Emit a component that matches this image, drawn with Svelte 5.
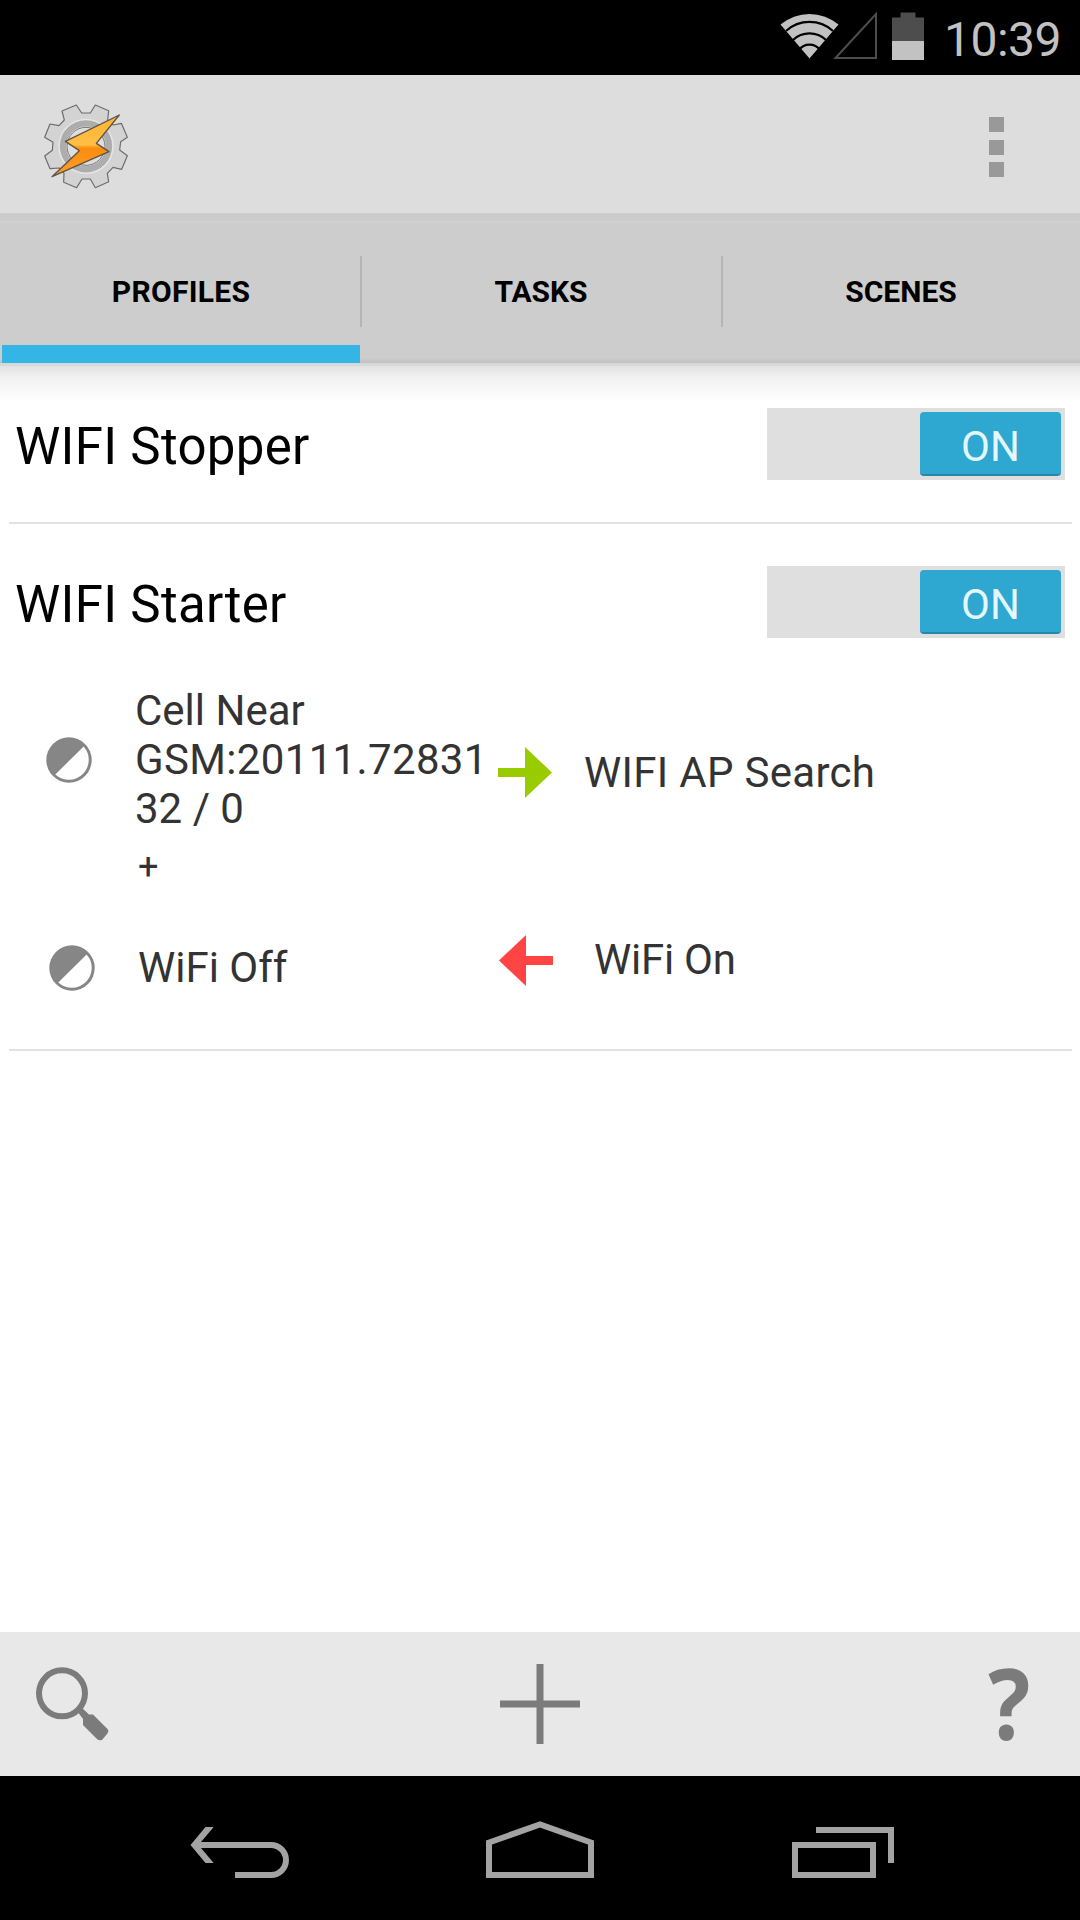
<script>
  const tabs = ['PROFILES', 'TASKS', 'SCENES'];
  let activeTab = $state('PROFILES');

  const profiles = [
    { name: 'WIFI Stopper', open: false },
    { name: 'WIFI Starter', open: true }
  ];
</script>

{#snippet halfCircle()}
  <svg width="46" height="46" viewBox="0 0 46 46">
    <circle cx="23" cy="23" r="22.700" fill="#868686" />
    <path d="M9.300 37.600L37.600 9.400A20 20 0 0 1 9.300 37.600Z" fill="#fff" />
  </svg>
{/snippet}

<div class="screen">
  <div class="status-bar">
    <svg width="150" height="75" viewBox="776 0 150 75">
      <path d="M809.500 58.500L780.500 24.500A45 45 0 0 1 838.500 24.500Z" fill="#c2c2c2" />
      <g fill="none" stroke="#000" stroke-width="2.200">
        <path d="M786 31A35 35 0 0 1 833 31" />
        <path d="M793 40A24 24 0 0 1 826 40" />
        <path d="M799 50A13 13 0 0 1 820 50" />
      </g>
      <path d="M835.500 58L876 14V58Z" fill="none" stroke="#4d4d4d" stroke-width="2" />
      <path d="M892 17.500H900.500V12.500H915.500V17.500H924V42H892Z" fill="#4d4d4d" />
      <path d="M892 41H924V60H892Z" fill="#c2c2c2" />
    </svg>
    <span class="clock">10:39</span>
  </div>

  <header class="action-bar">
    <svg class="logo" width="140" height="130" viewBox="0 0 420 390">
      <defs>
        <linearGradient id="bolt" x1="0" y1="0" x2="0" y2="1">
          <stop offset="0" stop-color="#fdb52f" />
          <stop offset="0.480" stop-color="#ffbe45" />
          <stop offset="0.540" stop-color="#fb8c0c" />
          <stop offset="1" stop-color="#fba02c" />
        </linearGradient>
      </defs>
      <path
        d="M126 93L169 75L185 99H211L226 75L266 92L263 120L280 135L304 130L322 172L302 185L299 210L322 227L305 268L279 262L262 280L266 305L226 323L211 297H186L170 323L131 307L132 280L118 264L90 266L74 228L97 211L99 187L74 172L90 132L117 137L133 120Z"
        fill="#d3d3d3" stroke="#6c6c6c" stroke-width="3.500" stroke-linejoin="round"
      />
      <circle cx="198" cy="199" r="83" fill="#e6e6e6" />
      <circle cx="198" cy="199" r="69" fill="none" stroke="#adadad" stroke-width="19" />
      <circle cx="198" cy="199" r="57" fill="#dedede" stroke="#777" stroke-width="3" />
      <path d="M298 105L229 190L267 215L96 290L178 212L136 184Z" fill="url(#bolt)" stroke="#5f5346" stroke-width="4" stroke-linejoin="round" />
    </svg>
    <div class="overflow"><i></i><i></i><i></i></div>
  </header>

  <nav class="tabs">
    {#each tabs as tab}
      <button class="tab" class:active={tab === activeTab} onclick={() => (activeTab = tab)}>
        {tab}
      </button>
    {/each}
  </nav>

  <main>
    {#each profiles as profile}
      <section class="profile">
        <div class="profile-head">
          <span class="title">{profile.name}</span>
          <div class="switch"><span class="thumb">ON</span></div>
        </div>
        {#if profile.open}
          <div class="details">
            <div class="contexts">
              <div class="context">
                {@render halfCircle()}
                <span>Cell Near<br /><span class="cell-id">GSM:20111.72831</span><br />32 / 0</span>
              </div>
              <div class="and">+</div>
              <div class="context second">
                {@render halfCircle()}
                <span>WiFi Off</span>
              </div>
            </div>
            <div class="tasks">
              <div class="task">
                <svg width="55" height="51" viewBox="0 0 55 51">
                  <path d="M0 21H27V0L54 25.500L27 51V30H0Z" fill="#99cc00" />
                </svg>
                <span class="enter">WIFI AP Search</span>
              </div>
              <div class="task">
                <svg width="55" height="51" viewBox="0 0 55 51">
                  <path d="M55 21H28V0L1 25.500L28 51V30H55Z" fill="#ff4444" />
                </svg>
                <span class="exit">WiFi On</span>
              </div>
            </div>
          </div>
        {/if}
      </section>
    {/each}
  </main>

  <footer class="toolbar">
    <svg width="80" height="80" viewBox="30 1664 80 80">
      <circle cx="62" cy="1693.300" r="23" fill="none" stroke="#7b7b7b" stroke-width="6" />
      <path d="M77 1711L81 1707L89 1714.500H93L108 1729.500Q109 1732 107 1734L102 1740Q99 1741 97 1739L83 1725V1719Z" fill="#7b7b7b" />
    </svg>
    <svg width="80" height="80" viewBox="0 0 80 80">
      <path d="M40 0V80M0 40H80" stroke="#7b7b7b" stroke-width="7" />
    </svg>
    <span class="help">?</span>
  </footer>

  <div class="nav-bar">
    <svg width="102" height="60" viewBox="189 1821 102 60">
      <path class="solid" d="M190.500 1845L205.500 1827H213.700L201 1842H271A18 18 0 0 1 271 1878H235V1872H271A12 12 0 0 0 271 1848H201L213.700 1863H205.500Z" />
    </svg>
    <svg width="108" height="60" viewBox="486 1821 108 60">
      <path d="M489 1875V1842.500L540 1824.500L591 1842.500V1875Z" />
    </svg>
    <svg width="102" height="60" viewBox="792 1821 102 60">
      <path d="M795 1845H873V1875H795ZM816 1830H891V1863" />
    </svg>
  </div>
</div>

<style>
  :global(body) {
    background: #fff;
  }

  .screen {
    display: flex;
    flex-direction: column;
    width: 1080px;
    height: 1920px;
    overflow: hidden;
    font-family: Roboto, sans-serif;
    color: #000;
  }

  .screen svg {
    display: block;
    flex: none;
  }

  .status-bar {
    display: flex;
    justify-content: flex-end;
    height: 75px;
    padding-right: 18px;
    background: #000;
  }

  .clock {
    width: 118px;
    margin-left: 18px;
    font-size: 48px;
    line-height: 79px;
    letter-spacing: -0.5px;
    color: #c2c2c2;
    white-space: nowrap;
  }

  .action-bar {
    display: flex;
    justify-content: space-between;
    align-items: flex-start;
    height: 138px;
    padding: 0 76px 0 20px;
    box-sizing: border-box;
    background: #ddd;
  }

  .logo {
    margin-top: 5px;
  }

  .overflow {
    display: grid;
    gap: 7.500px;
    padding-top: 42px;
  }

  .overflow i {
    width: 15px;
    height: 15px;
    background: #999;
  }

  .tabs {
    display: grid;
    grid-template-columns: 360px 361px 359px;
    height: 153px;
    box-sizing: border-box;
    padding-top: 9px;
    background: linear-gradient(#cbcbcb 0 8px, #d1d1d1 8px 10px, #cdcdcd 10px 145px, #c0c0c0 150px, #d8d8d8 150px 153px);
  }

  .tab {
    display: flex;
    align-items: center;
    justify-content: center;
    height: 141px;
    padding: 0 0 2px 1px;
    border: 0;
    background: linear-gradient(#b5b5b5, #b5b5b5) 0 34px / 2px 71px no-repeat;
    font: 700 30px/36px Roboto, sans-serif;
    color: #000;
  }

  .tab:first-child {
    margin-left: 2px;
    padding-left: 0;
    background: none;
    letter-spacing: 0.3px;
  }

  .tab.active {
    background: linear-gradient(#33b5e5, #33b5e5) 0 123px / 100% 18px no-repeat;
  }

  main {
    flex: 1;
    background: linear-gradient(#e2e2e2, #f2f2f2 12px, #fff 36px);
  }

  .profile {
    margin: 0 8px 0 9px;
    border-bottom: 2px solid #e2e2e2;
  }

  .profile-head {
    display: flex;
    justify-content: space-between;
    align-items: center;
    height: 72px;
    padding: 42px 7px 42px 6px;
  }

  .profile-head:not(:last-child) {
    padding-bottom: 0;
  }

  .title {
    padding-top: 6px;
    font-size: 51px;
    line-height: 60px;
    letter-spacing: 0.3px;
  }

  .switch {
    display: flex;
    justify-content: flex-end;
    width: 298px;
    height: 72px;
    padding: 4px 4px 4px 0;
    box-sizing: border-box;
    background: #dfdfdf;
  }

  .thumb {
    width: 141px;
    height: 64px;
    box-sizing: border-box;
    border-bottom: 2px solid #2687ab;
    border-radius: 4px;
    background: #2ea7d1;
    color: #e3f7ff;
    font-size: 42px;
    line-height: 69px;
    text-align: center;
  }

  .details {
    display: flex;
    height: 411px;
    font-size: 42px;
    line-height: 49px;
    color: #333;
    white-space: nowrap;
  }

  .contexts {
    width: 489px;
    padding-top: 48px;
  }

  .context {
    display: flex;
    align-items: center;
    gap: 43px;
    padding-left: 37px;
  }

  .context.second {
    padding-left: 40px;
  }

  .cell-id {
    letter-spacing: 0.35px;
  }

  .and {
    height: 110px;
    padding-left: 129px;
    box-sizing: border-box;
    font-size: 36px;
    line-height: 68px;
  }

  .tasks {
    display: flex;
    flex-direction: column;
    gap: 137px;
    padding-top: 109px;
  }

  .task {
    display: flex;
    align-items: center;
    height: 51px;
  }

  .enter {
    margin-left: 31px;
    letter-spacing: 0.3px;
  }

  .exit {
    margin: 0 0 2px 41px;
    letter-spacing: -0.25px;
  }

  .toolbar {
    display: grid;
    grid-template-columns: 1fr 80px 1fr;
    align-items: center;
    height: 144px;
    padding: 0 30px;
    box-sizing: border-box;
    background: #e8e8e8;
  }

  .help {
    justify-self: end;
    width: 46px;
    margin: 0 18px 4px 0;
    font: 700 98px/140px 'Open Sans', sans-serif;
    color: #7b7b7b;
    transform: scaleX(0.9);
  }

  .nav-bar {
    display: flex;
    justify-content: space-between;
    height: 144px;
    padding: 45px 186px 0 189px;
    box-sizing: border-box;
    background: #000;
  }

  .nav-bar svg:nth-child(2) {
    margin-right: 3px;
  }

  .nav-bar path {
    fill: none;
    stroke: #a3a3a3;
    stroke-width: 6;
  }

  .nav-bar .solid {
    fill: #a3a3a3;
    stroke: none;
  }
</style>
